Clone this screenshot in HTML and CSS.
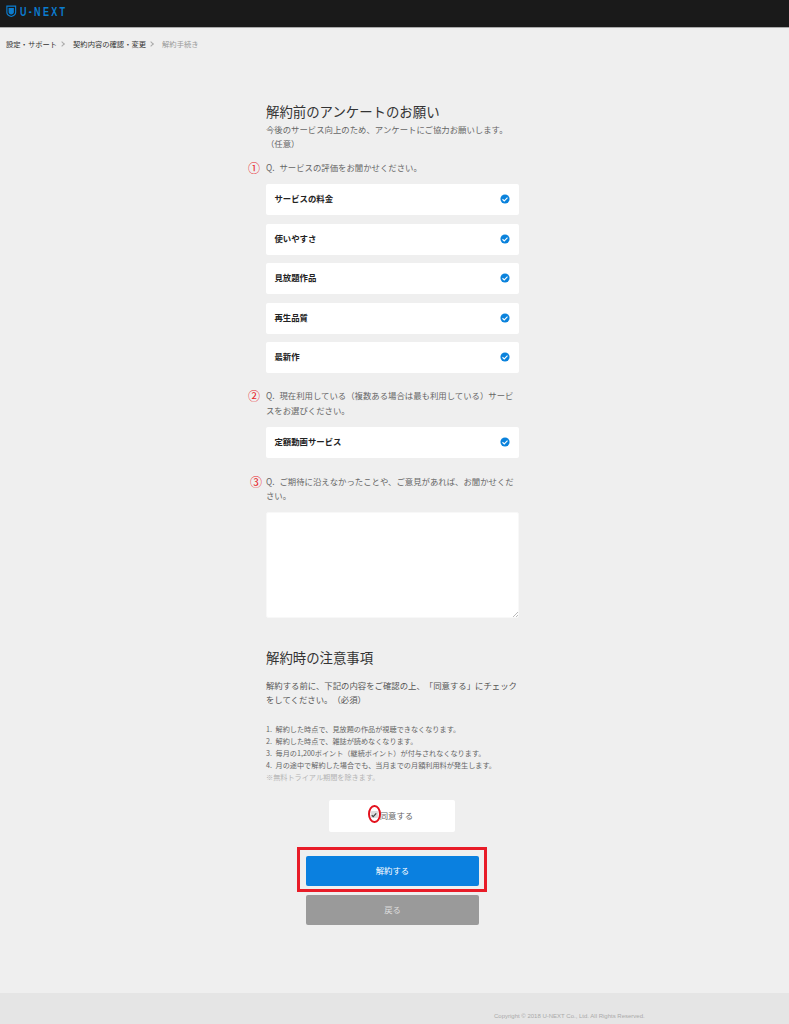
FILE: index.html
```html
<!DOCTYPE html>
<html lang="ja">
<head>
<meta charset="utf-8">
<title>解約手続き</title>
<link rel="stylesheet" href="styles.css">
</head>
<body>
<header class="topbar">
  <div class="logo">
    <svg class="shield" viewBox="0 0 12 14" width="10.500" height="12.500"><path d="M1 1.200h10v7.200c0 2.400-2.400 3.800-5 4.600C3.400 12.200 1 10.800 1 8.400z" fill="none" stroke="#0b7dd0" stroke-width="1.300"/><path d="M3 3.400h6v4.600c0 1.300-1.400 2.200-3 2.800-1.600-.6-3-1.500-3-2.800z" fill="#0b7dd0"/></svg>
    <span class="logo-text">U-NEXT</span>
  </div>
</header>
<nav class="crumbs">
  <a>設定・サポート</a><span class="sep"></span>
  <a>契約内容の確認・変更</a><span class="sep"></span>
  <span class="current">解約手続き</span>
</nav>
<main class="col">
  <h1 class="title">解約前のアンケートのお願い</h1>
  <p class="lead">今後のサービス向上のため、アンケートにご協力お願いします。（任意）</p>

  <div class="question q1"><span class="mark">①</span>Q. サービスの評価をお聞かせください。</div>
  <div class="options">
    <div class="option"><span>サービスの料金</span><svg class="tick" viewBox="0 0 12 12"><circle cx="6" cy="6" r="5.500" fill="#0a82dc"/><path d="M3 6.300l2.100 2L9 4.300" fill="none" stroke="#fff" stroke-width="1.300"/></svg></div>
    <div class="option"><span>使いやすさ</span><svg class="tick" viewBox="0 0 12 12"><circle cx="6" cy="6" r="5.500" fill="#0a82dc"/><path d="M3 6.300l2.100 2L9 4.300" fill="none" stroke="#fff" stroke-width="1.300"/></svg></div>
    <div class="option"><span>見放題作品</span><svg class="tick" viewBox="0 0 12 12"><circle cx="6" cy="6" r="5.500" fill="#0a82dc"/><path d="M3 6.300l2.100 2L9 4.300" fill="none" stroke="#fff" stroke-width="1.300"/></svg></div>
    <div class="option"><span>再生品質</span><svg class="tick" viewBox="0 0 12 12"><circle cx="6" cy="6" r="5.500" fill="#0a82dc"/><path d="M3 6.300l2.100 2L9 4.300" fill="none" stroke="#fff" stroke-width="1.300"/></svg></div>
    <div class="option"><span>最新作</span><svg class="tick" viewBox="0 0 12 12"><circle cx="6" cy="6" r="5.500" fill="#0a82dc"/><path d="M3 6.300l2.100 2L9 4.300" fill="none" stroke="#fff" stroke-width="1.300"/></svg></div>
  </div>

  <div class="question q2"><span class="mark">②</span>Q. 現在利用している（複数ある場合は最も利用している）サービスをお選びください。</div>
  <div class="options">
    <div class="option"><span>定額動画サービス</span><svg class="tick" viewBox="0 0 12 12"><circle cx="6" cy="6" r="5.500" fill="#0a82dc"/><path d="M3 6.300l2.100 2L9 4.300" fill="none" stroke="#fff" stroke-width="1.300"/></svg></div>
  </div>

  <div class="question q3"><span class="mark mark3">③</span>Q. ご期待に沿えなかったことや、ご意見があれば、お聞かせください。</div>
  <textarea class="comment"></textarea>

  <h2 class="title notes-title">解約時の注意事項</h2>
  <p class="notes-lead">解約する前に、下記の内容をご確認の上、「同意する」にチェックをしてください。（必須）</p>
  <ol class="notes">
    <li>1. 解約した時点で、見放題の作品が視聴できなくなります。</li>
    <li>2. 解約した時点で、雑誌が読めなくなります。</li>
    <li>3. 毎月の1,200ポイント（継続ポイント）が付与されなくなります。</li>
    <li>4. 月の途中で解約した場合でも、当月までの月額利用料が発生します。</li>
    <li class="muted">※無料トライアル期間を除きます。</li>
  </ol>

  <div class="agree">
    <span class="check"><svg viewBox="0 0 8 8" width="6" height="6"><path d="M1 4.300l2 2L7 1.800" fill="none" stroke="#444" stroke-width="1.600"/></svg><span class="ring"></span></span>
    <span class="agree-label">同意する</span>
  </div>

  <div class="actions">
    <div class="primary-wrap"><button class="btn primary">解約する</button></div>
    <button class="btn back">戻る</button>
  </div>
</main>
<footer class="footer">Copyright © 2018 U-NEXT Co., Ltd. All Rights Reserved.</footer>
</body>
</html>
```

FILE: styles.css
```css
* { box-sizing: border-box; }
html, body { margin: 0; padding: 0; }
body {
  background: #efefef;
  color: #555;
  font-family: "Noto Sans CJK JP", "Liberation Sans", sans-serif;
  font-size: 8.400px;
  text-spacing-trim: space-all;
  width: 789px;
  height: 1024px;
  overflow: hidden;
}
.topbar {
  height: 28px;
  background: #1a1a1a;
  border-bottom: 1px solid #aaa;
  padding: 5px 0 0 6px;
}
.logo { display: flex; align-items: center; gap: 3.500px; height: 13px; }
.logo-text {
  font-family: "Liberation Sans", sans-serif;
  font-weight: 700;
  font-size: 12.500px;
  letter-spacing: 3.200px;
  color: #0b7dd0;
  transform: scaleX(.72);
  transform-origin: left center;
}
.crumbs {
  display: flex;
  align-items: center;
  height: 12px;
  margin: 9.500px 0 0 6px;
  font-size: 7.300px;
  color: #333;
}
.sep {
  width: 4px;
  height: 4px;
  margin: 0 9px 0 3px;
  border-top: 1px solid #aaa;
  border-right: 1px solid #aaa;
  transform: rotate(45deg);
}
.current { color: #999; }
.col { width: 253px; margin: 51.500px 0 0 266px; }
.title {
  margin: 0;
  font-size: 13.400px;
  font-weight: 400;
  line-height: 20px;
  color: #333;
}
.lead { margin: 1px 0 0; line-height: 14px; color: #666; }
.question { position: relative; line-height: 14.500px; color: #666; word-spacing: 3px; }
.q1 { margin-top: 10px; }
.q2 { margin-top: 15px; }
.q3 { margin-top: 16px; }
.mark {
  position: absolute;
  left: -18px;
  top: 1px;
  font-size: 12px;
  color: #e8232a;
}
.mark3 { left: -16px; }
.options { display: flex; flex-direction: column; gap: 8.600px; margin-top: 9.500px; }
.option {
  display: flex;
  align-items: center;
  justify-content: space-between;
  height: 31px;
  padding: 0 9px 1px 8.500px;
  background: #fff;
  border-radius: 2px;
  font-weight: 700;
  color: #222;
}
.option span { margin-bottom: 2px; }
.tick { width: 10px; height: 10px; }
.comment {
  display: block;
  width: 253px;
  height: 106px;
  margin-top: 9.500px;
  background: #fff;
  border: 1px solid #f8f8f8;
  border-radius: 2px;
}
.comment::-webkit-resizer {
  background: linear-gradient(135deg, transparent 50%, #bbb 50%, #bbb 60%, transparent 60%, transparent 75%, #bbb 75%, #bbb 85%, transparent 85%) no-repeat right bottom / 6px 6px;
}
.notes-title { margin-top: 29px; }
.notes-lead { margin: 10.500px 0 0; line-height: 14.500px; color: #555; }
.notes {
  list-style: none;
  margin: 17.500px 0 0;
  padding: 0;
  font-size: 7.150px;
  line-height: 11.800px;
  color: #666;
  word-spacing: 2px;
}
.muted { color: #b4b4b4; }
.agree {
  display: flex;
  align-items: center;
  justify-content: center;
  gap: 1px;
  width: 126px;
  height: 32px;
  margin: 17px 0 0 63px;
  background: #fff;
  border-radius: 2px;
  font-size: 8.400px;
  color: #666;
}
.agree-label { margin: 0 0 3px 1px; }
.check {
  position: relative;
  display: flex;
  align-items: center;
  justify-content: center;
  width: 7px;
  height: 7px;
  margin-bottom: 3px;
  background: #ddd;
  border-radius: 1px;
}
.ring {
  position: absolute;
  left: -3px;
  top: -6.500px;
  width: 13px;
  height: 18.500px;
  border: 2px solid #e3101c;
  border-radius: 50%;
}
.actions { display: flex; flex-direction: column; align-items: center; margin-top: 14.500px; }
.primary-wrap {
  width: 190px;
  height: 45.500px;
  padding: 6.500px 0 0 6px;
  border: 3px solid #e81c28;
  margin-left: -1px;
}
.btn {
  display: block;
  width: 173px;
  height: 30px;
  padding: 0 0 3px;
  border: 0;
  border-radius: 2px;
  color: #fff;
  font-family: inherit;
  font-size: 8.400px;
}
.primary { background: #0a80e0; }
.back { background: #9a9a9a; margin-top: 3px; color: #ddd; }
.footer {
  position: absolute;
  left: 0;
  right: 0;
  top: 992.500px;
  height: 32px;
  padding: 19px 0 0 494px;
  background: #e5e5e5;
  font-family: "Liberation Sans", sans-serif;
  font-size: 6px;
  line-height: 8px;
  color: #aaa;
}
```
